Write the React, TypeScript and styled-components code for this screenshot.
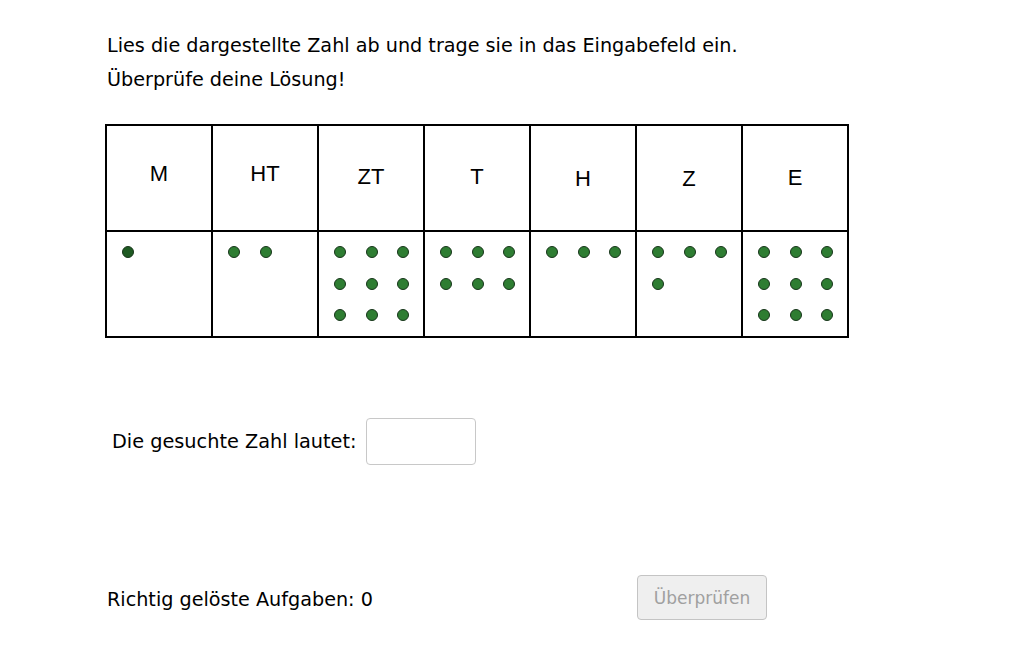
import React from "react";
import styled, { createGlobalStyle } from "styled-components";

const Global = createGlobalStyle`
  html, body { margin: 0; padding: 0; background: #ffffff; }
  body { font-family: "DejaVu Sans", "Liberation Sans", sans-serif; color: #000; }
`;

const Page = styled.div`
  width: 1032px;
  height: 645px;
  box-sizing: border-box;
  padding: 29px 0 0 106px;
  display: flex;
  flex-direction: column;
  overflow: hidden;
`;

const Instructions = styled.div`
  font-family: "DejaVu Sans", "Liberation Sans", sans-serif;
  font-size: 19.2px;
  line-height: 34px;
  padding-left: 1px;
`;

const Table = styled.div`
  margin-top: 27px;
  display: grid;
  grid-template-columns: repeat(7, 106px);
  grid-template-rows: 106px 106px;
  width: max-content;
  border-left: 2px solid #000;
  border-top: 2px solid #000;
  margin-left: -1px;
`;

const HeadCell = styled.div<{ $dy: number; $dx: number }>`
  box-sizing: border-box;
  border-right: 2px solid #000;
  border-bottom: 2px solid #000;
  display: flex;
  justify-content: center;
  align-items: flex-start;
  padding-top: ${(p) => 36 + p.$dy}px;
  padding-left: ${(p) => p.$dx}px;
  font-family: "Liberation Sans", Arial, sans-serif;
  font-size: 22px;
  line-height: 24px;
`;

const DotCell = styled.div`
  box-sizing: border-box;
  border-right: 2px solid #000;
  border-bottom: 2px solid #000;
  padding: 14px 0 0 15px;
  display: grid;
  grid-template-columns: repeat(3, 12px);
  grid-auto-rows: 12px;
  column-gap: 19.6px;
  row-gap: 19.6px;
  align-content: start;
`;

const Dot = styled.span<{ $dark?: boolean }>`
  width: 12px;
  height: 12px;
  box-sizing: border-box;
  border-radius: 50%;
  background: ${(p) => (p.$dark ? "#1e5a22" : "#2e7d32")};
  border: 1px solid #17351a;
`;

const AnswerRow = styled.div`
  margin-top: 80px;
  padding-left: 6px;
  display: flex;
  align-items: center;
  gap: 9px;
  font-family: "DejaVu Sans", "Liberation Sans", sans-serif;
  font-size: 19.3px;
`;

const Input = styled.input`
  width: 110px;
  height: 47px;
  box-sizing: border-box;
  border: 1px solid #c8c8c8;
  border-radius: 4px;
  background: #fff;
  outline: none;
`;

const BottomRow = styled.div`
  margin-top: 110px;
  display: grid;
  grid-template-columns: 531px auto;
  align-items: center;
  font-family: "DejaVu Sans", "Liberation Sans", sans-serif;
  font-size: 19.2px;
`;

const Score = styled.div`
  padding-left: 1px;
  padding-top: 4px;
`;

const CheckButton = styled.button`
  width: 130px;
  height: 45px;
  box-sizing: border-box;
  border: 1px solid #c4c4c4;
  border-radius: 4px;
  background: #efefef;
  color: #a0a0a0;
  font-family: "DejaVu Sans", "Liberation Sans", sans-serif;
  font-size: 17px;
  padding: 0;
`;

const columns = [
  { label: "M", count: 1, dy: 0, dx: 0, dark: true },
  { label: "HT", count: 2, dy: 0, dx: -3, dark: false },
  { label: "ZT", count: 9, dy: 3, dx: 0, dark: false },
  { label: "T", count: 6, dy: 3, dx: 0, dark: false },
  { label: "H", count: 3, dy: 5, dx: 0, dark: false },
  { label: "Z", count: 4, dy: 5, dx: 0, dark: false },
  { label: "E", count: 9, dy: 4, dx: 0, dark: false },
];

export default function App() {
  return (
    <>
      <Global />
      <Page>
        <Instructions>
          Lies die dargestellte Zahl ab und trage sie in das Eingabefeld ein.
          <br />
          Überprüfe deine Lösung!
        </Instructions>
        <Table>
          {columns.map((c) => (
            <HeadCell key={"h" + c.label} $dy={c.dy} $dx={c.dx}>
              {c.label}
            </HeadCell>
          ))}
          {columns.map((c) => (
            <DotCell key={"d" + c.label}>
              {Array.from({ length: c.count }).map((_, i) => (
                <Dot key={i} $dark={c.dark} />
              ))}
            </DotCell>
          ))}
        </Table>
        <AnswerRow>
          <span>Die gesuchte Zahl lautet:</span>
          <Input type="text" aria-label="Die gesuchte Zahl" />
        </AnswerRow>
        <BottomRow>
          <Score>Richtig gelöste Aufgaben: 0</Score>
          <CheckButton disabled>Überprüfen</CheckButton>
        </BottomRow>
      </Page>
    </>
  );
}
